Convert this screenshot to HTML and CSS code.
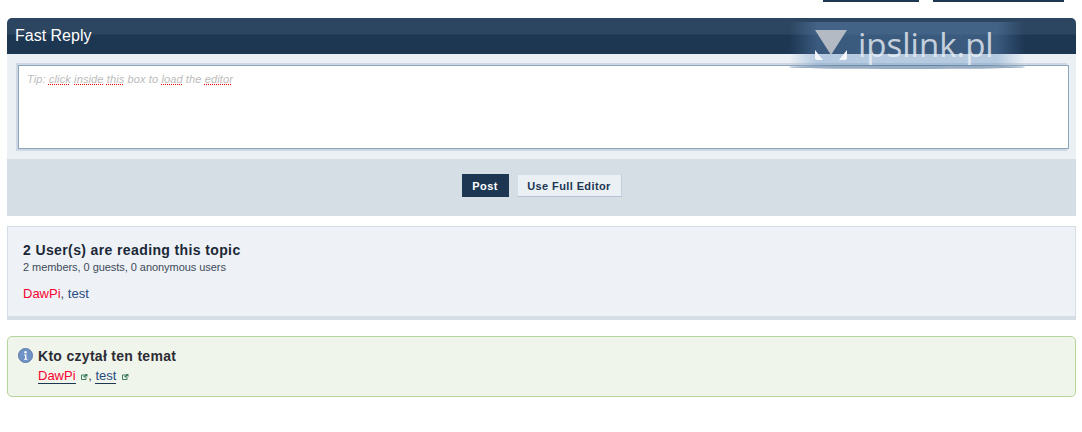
FILE: index.html
```html
<!DOCTYPE html>
<html lang="en">

<head>
  <meta charset="UTF-8">
  <title>Fast Reply</title>
  <link rel="stylesheet" href="styles.css">
</head>

<body>
  <div class="top-buttons">
    <span class="top-button top-button-reply"></span>
    <span class="top-button top-button-new"></span>
  </div>

  <div class="fast-reply">
    <h3 class="maintitle">Fast Reply</h3>
    <div class="editor-row">
      <div class="editor-box">
        <span class="tip">Tip: <u>click</u> <u>inside</u> <u>this</u> box to <u>load</u> the <u>editor</u></span>
      </div>
    </div>
    <div class="submit-bar">
      <button class="btn btn-post">Post</button>
      <button class="btn btn-full">Use Full Editor</button>
    </div>

    <!-- znak wodny na naglowku -->
    <div class="watermark">
      <svg class="watermark-logo" viewBox="0 0 32 32" width="32" height="32">
        <path d="M0 0H32L16 25Z" fill="#b3bac4" />
        <path d="M0 20L8 30H1.500L0 28.500Z" fill="#f4f7fa" />
        <path d="M32 20V28.500L30.500 30H24Z" fill="#f4f7fa" />
      </svg>
      <span class="watermark-text">ipslink.pl</span>
    </div>
  </div>

  <div class="readers">
    <h4 class="readers-title">2 User(s) are reading this topic</h4>
    <p class="readers-count">2 members, 0 guests, 0 anonymous users</p>
    <p class="readers-names"><span class="admin">DawPi</span>, <span class="member">test</span></p>
  </div>

  <div class="who-read">
    <svg class="info-icon" viewBox="0 0 16 16" width="15" height="15">
      <circle cx="8" cy="8" r="7.500" fill="#6f93c4" stroke="#5878a8" />
      <circle cx="8" cy="4.500" r="1.300" fill="#fff" />
      <path d="M6.500 7H9V11.500H10V12.500H6.500V11.500H7.500V8H6.500Z" fill="#fff" />
    </svg>
    <div class="who-read-body">
      <h4 class="who-read-title">Kto czytał ten temat</h4>
      <p class="who-read-names">
        <a class="name-link admin">DawPi</a>
        <svg class="ext-icon" viewBox="0 0 7 7" width="7" height="7">
          <path d="M1 2H.500V6.500H5V5M1 2H3M5 5V4" fill="none" stroke="#3f7f5f" />
          <path d="M3 1H6.500V4L5.300 3L3.500 4.800L2.200 3.500L4 1.800Z" fill="#3f7f5f" />
        </svg><span class="comma">,</span>
        <a class="name-link member">test</a>
        <svg class="ext-icon" viewBox="0 0 7 7" width="7" height="7">
          <path d="M1 2H.500V6.500H5V5M1 2H3M5 5V4" fill="none" stroke="#3f7f5f" />
          <path d="M3 1H6.500V4L5.300 3L3.500 4.800L2.200 3.500L4 1.800Z" fill="#3f7f5f" />
        </svg>
      </p>
    </div>
  </div>
</body>

</html>
```

FILE: styles.css
```css
body {
  margin: 0;
  padding: 0 6px 0 7px;
  background-color: #fff;
  font-family: "Liberation Sans", Arial, sans-serif;
  font-size: 13px;
  color: #1c2837;
}

.top-buttons {
  display: flex;
  justify-content: flex-end;
  gap: 14px;
  height: 2px;
  margin-bottom: 16px;
  padding-right: 12px;
}

.top-button {
  height: 2px;
  background-color: #1d3652;
}

.top-button-reply {
  width: 96px;
}

.top-button-new {
  width: 131px;
}

.fast-reply {
  position: relative;
}

.maintitle {
  margin: 0;
  height: 36px;
  padding-left: 8px;
  border-radius: 5px 5px 0 0;
  background: linear-gradient(to bottom, #2c4560 0, #2c4560 16px, #1d3652 17px, #1d3652 100%);
  color: #fff;
  font-size: 16px;
  font-weight: normal;
  line-height: 36px;
}

.editor-row {
  height: 84px;
  padding: 11px 7px 10px 11px;
  background-color: #ebf0f5;
}

.editor-box {
  height: 84px;
  padding: 5px 8px;
  box-sizing: border-box;
  border: 1px solid #8ba5bf;
  box-shadow: -2px -2px 0 #cfd8e2, -2px 2px 0 #cfd8e2;
  background-color: #fff;
}

.tip {
  color: #bbb;
  font-size: 11px;
  font-style: italic;
  letter-spacing: .12px;
}

.tip u {
  text-decoration: underline dotted #e00;
}

.submit-bar {
  display: flex;
  justify-content: center;
  align-items: flex-start;
  gap: 8px;
  height: 42px;
  padding-top: 15px;
  background-color: #d5dde5;
}

.btn {
  height: 23px;
  padding: 0;
  border: 1px solid #d5dde5;
  font-family: "Liberation Sans", Arial, sans-serif;
  font-size: 11px;
  font-weight: bold;
  letter-spacing: .4px;
  cursor: pointer;
}

.btn-post {
  width: 47px;
  background-color: #1d3652;
  border-color: #1d3652;
  color: #fff;
}

.btn-full {
  width: 105px;
  background-color: #ebf0f5;
  border-bottom-color: #b5c4d4;
  border-right-color: #c5d0dc;
  color: #1d3652;
}

.watermark {
  position: absolute;
  top: 4px;
  left: 782px;
  width: 236px;
  height: 43px;
  display: flex;
  align-items: flex-start;
  gap: 11px;
  padding: 8px 0 0 26px;
  box-sizing: border-box;
  background: linear-gradient(to right, rgba(101, 144, 192, 0) 0, rgba(101, 144, 192, .4) 12%, rgba(101, 144, 192, .4) 88%, rgba(101, 144, 192, 0) 100%);
}

.watermark::after {
  content: "";
  position: absolute;
  top: 100%;
  left: 0;
  right: 0;
  height: 4px;
  border-radius: 50%;
  background-color: rgba(70, 105, 145, .55);
}

.watermark-logo {
  flex: none;
}

.watermark-text {
  margin-top: -3px;
  color: #e9eef4;
  opacity: .8;
  font-family: "Open Sans", sans-serif;
  font-weight: 400;
  font-size: 33px;
  line-height: 36px;
}

.readers {
  height: 94px;
  box-sizing: border-box;
  margin-top: 10px;
  padding: 15px 15px 0;
  border: 1px solid #d5dde5;
  border-bottom-width: 4px;
  background-color: #eef2f6;
}

.readers-title {
  margin: 0;
  font-size: 14px;
  line-height: 16px;
  font-weight: bold;
  letter-spacing: .38px;
}

.readers-count {
  margin: 2px 0 0;
  font-size: 11px;
  line-height: 14px;
  letter-spacing: -.05px;
  color: #3d4a5a;
}

.readers-names {
  margin: 12px 0 0;
  line-height: 15px;
  color: #3d4a5a;
}

.admin {
  color: #f80030;
}

.member {
  color: #284a7e;
}

.who-read {
  display: flex;
  gap: 5px;
  height: 61px;
  box-sizing: border-box;
  margin-top: 16px;
  padding: 11px 10px 0 10px;
  border: 1px solid #b5d59a;
  border-radius: 5px;
  background-color: #f0f5ec;
}

.info-icon {
  flex: none;
}

.who-read-title {
  margin: 0;
  font-size: 14px;
  line-height: 16px;
  font-weight: bold;
  letter-spacing: .3px;
  color: #2c2c34;
}

.who-read-names {
  margin: 4px 0 0;
  line-height: 16px;
  color: #445;
}

.name-link {
  border-bottom: 1px solid #1d3652;
}

.ext-icon {
  margin-left: 2px;
}
```
